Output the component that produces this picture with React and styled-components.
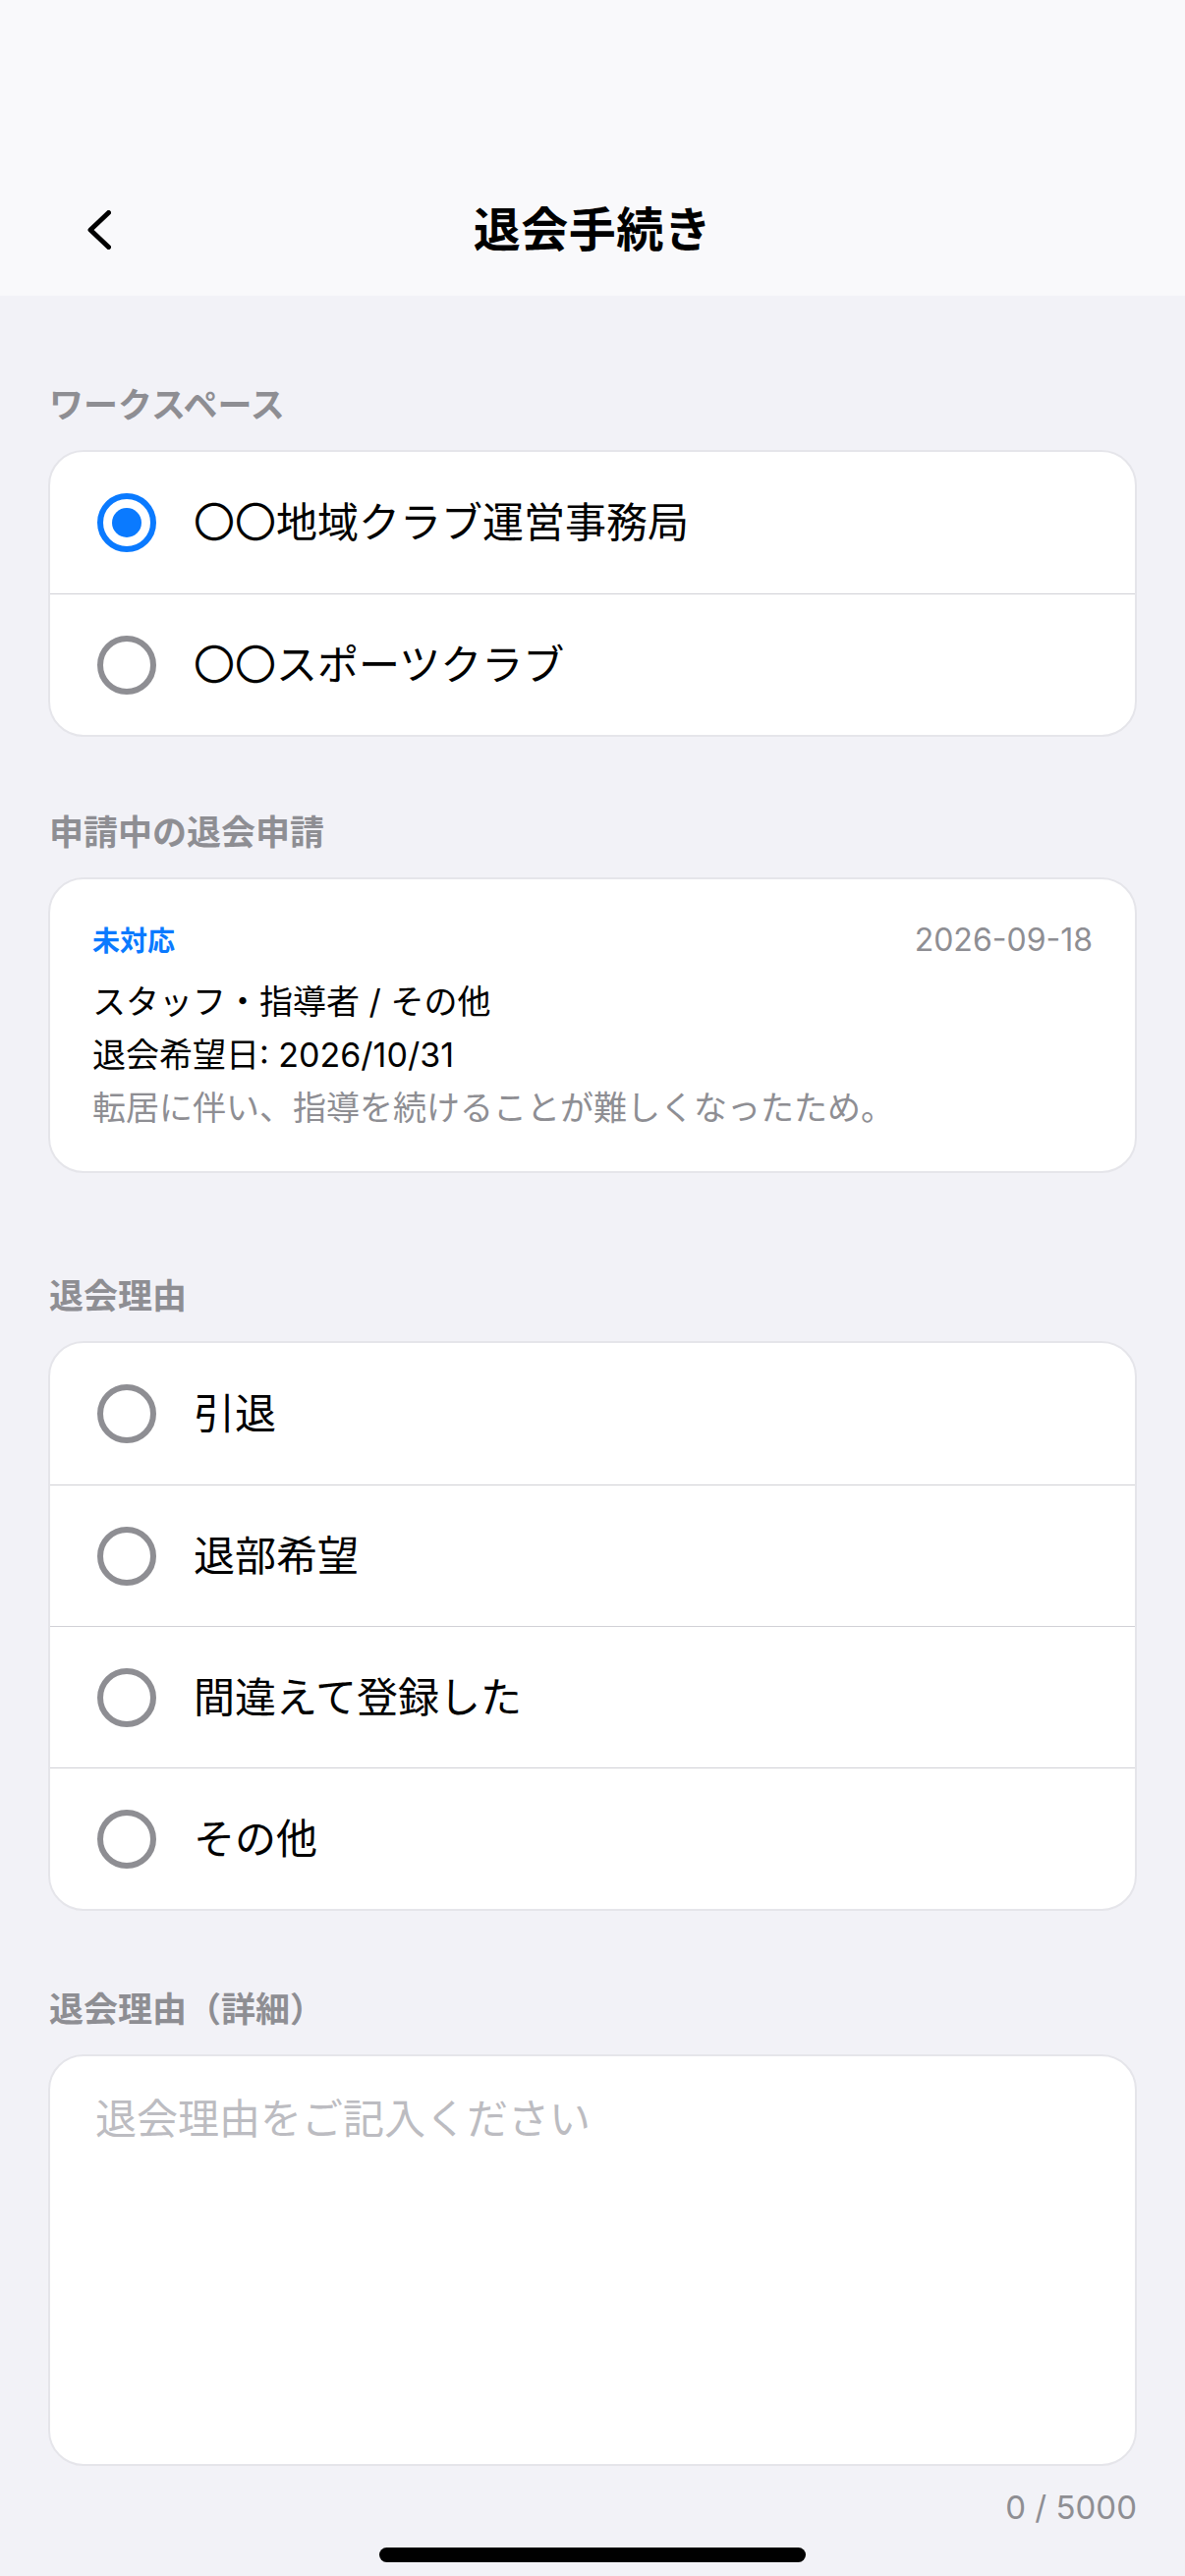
import React, { useState } from 'react'
import styled, { createGlobalStyle } from 'styled-components'

const GlobalStyle = createGlobalStyle`
  * { box-sizing: border-box; }
  body {
    margin: 0;
    background: #f2f2f7;
    font-family: 'Inter', 'Noto Sans CJK JP', sans-serif;
    color: #000;
  }
`

const Page = styled.div`
  position: relative;
  min-height: 2622px;
  background: #f2f2f7;
`

const Header = styled.header`
  height: 301px;
  background: #f9f9fb;
  display: flex;
  align-items: flex-end;
`

const NavBar = styled.div`
  width: 100%;
  height: 134px;
  display: grid;
  grid-template-columns: 1fr auto 1fr;
  align-items: center;
`

const BackButton = styled.button`
  justify-self: start;
  margin-left: 89px;
  padding: 0;
  border: none;
  background: none;
  display: flex;
  align-items: center;
`

const Title = styled.h1`
  margin: 0;
  font-size: 48px;
  font-weight: 700;
  line-height: 56px;
  letter-spacing: 0.5px;
`

const Content = styled.main`
  padding: 0 49px 60px;
`

const Section = styled.section`
  margin-top: ${p => p.$gap}px;
`

const SectionLabel = styled.h2`
  margin: 0 0 22px;
  padding-left: 1px;
  font-size: 35px;
  line-height: 48px;
  font-weight: 700;
  color: #8e8e93;
`

const Card = styled.div`
  background: #fff;
  border: 2px solid #e5e5ea;
  border-radius: 36px;
  overflow: hidden;
`

const OptionRow = styled.label`
  height: 144px;
  display: flex;
  align-items: center;
  gap: 38px;
  padding-left: 48px;
  cursor: pointer;

  & + & {
    border-top: 1px solid #d1d1d6;
  }
`

const Radio = styled.span`
  flex: none;
  width: 60px;
  height: 60px;
  border-radius: 50%;
  border: 6px solid ${p => (p.$checked ? '#0a7aff' : '#8e8e93')};
  display: flex;
  align-items: center;
  justify-content: center;

  &::after {
    content: '';
    width: 30px;
    height: 30px;
    border-radius: 50%;
    background: #0a7aff;
    display: ${p => (p.$checked ? 'block' : 'none')};
  }
`

const OptionText = styled.span`
  font-size: 42px;
  line-height: 56px;
`

const RequestCard = styled(Card)`
  padding: 40px 43px 40px 43px;
`

const RequestHead = styled.div`
  display: flex;
  justify-content: space-between;
  align-items: center;
  height: 42px;
  margin-bottom: 19px;
`

const Status = styled.span`
  font-size: 28px;
  font-weight: 700;
  color: #0a7aff;
`

const DateText = styled.span`
  font-size: 32px;
  color: #8e8e93;
`

const RequestLine = styled.p`
  margin: 0;
  font-size: 34px;
  line-height: 48px;
  color: ${p => (p.$muted ? '#8e8e93' : '#000')};

  & + & {
    margin-top: ${p => (p.$muted ? 6 : 3)}px;
  }
`

const TextArea = styled.textarea`
  display: block;
  width: 100%;
  height: 419px;
  resize: none;
  outline: none;
  background: #fff;
  border: 2px solid #e5e5ea;
  border-radius: 36px;
  padding: 36px 46px;
  font-family: inherit;
  font-size: 42px;
  line-height: 56px;
  color: #000;

  &::placeholder {
    color: #bcbcc1;
  }
`

const Counter = styled.div`
  margin-top: 22px;
  text-align: right;
  font-size: 33px;
  line-height: 40px;
  color: #8e8e93;
`

const HomeIndicator = styled.div`
  position: absolute;
  left: 50%;
  bottom: 24px;
  width: 434px;
  height: 15px;
  margin-left: -217px;
  border-radius: 8px;
  background: #000;
`

const workspaces = ['〇〇地域クラブ運営事務局', '〇〇スポーツクラブ']
const reasons = ['引退', '退部希望', '間違えて登録した', 'その他']

const ChevronLeft = () => (
  <svg width="24" height="40" viewBox="0 0 24 40" fill="none">
    <path
      d="M21.5 2.5 L3 20 L21.5 37.5"
      stroke="#000"
      strokeWidth="5"
      strokeLinecap="round"
      strokeLinejoin="round"
    />
  </svg>
)

const OptionList = ({ items, value, onChange }) => (
  <Card>
    {items.map(item => (
      <OptionRow key={item} onClick={() => onChange(item)}>
        <Radio $checked={value === item} />
        <OptionText>{item}</OptionText>
      </OptionRow>
    ))}
  </Card>
)

const App = () => {
  const [workspace, setWorkspace] = useState(workspaces[0])
  const [reason, setReason] = useState(null)
  const [detail, setDetail] = useState('')

  return (
    <Page>
      <GlobalStyle />
      <Header>
        <NavBar>
          <BackButton aria-label="戻る">
            <ChevronLeft />
          </BackButton>
          <Title>退会手続き</Title>
          <div />
        </NavBar>
      </Header>

      <Content>
        <Section $gap={87}>
          <SectionLabel>ワークスペース</SectionLabel>
          <OptionList items={workspaces} value={workspace} onChange={setWorkspace} />
        </Section>

        <Section $gap={73}>
          <SectionLabel>申請中の退会申請</SectionLabel>
          <RequestCard>
            <RequestHead>
              <Status>未対応</Status>
              <DateText>2026-09-18</DateText>
            </RequestHead>
            <RequestLine>スタッフ・指導者 / その他</RequestLine>
            <RequestLine>退会希望日: 2026/10/31</RequestLine>
            <RequestLine $muted>転居に伴い、指導を続けることが難しくなったため。</RequestLine>
          </RequestCard>
        </Section>

        <Section $gap={101}>
          <SectionLabel>退会理由</SectionLabel>
          <OptionList items={reasons} value={reason} onChange={setReason} />
        </Section>

        <Section $gap={76}>
          <SectionLabel>退会理由（詳細）</SectionLabel>
          <TextArea
            placeholder="退会理由をご記入ください"
            value={detail}
            maxLength={5000}
            onChange={e => setDetail(e.target.value)}
          />
          <Counter>{detail.length} / 5000</Counter>
        </Section>
      </Content>

      <HomeIndicator />
    </Page>
  )
}

export default App
